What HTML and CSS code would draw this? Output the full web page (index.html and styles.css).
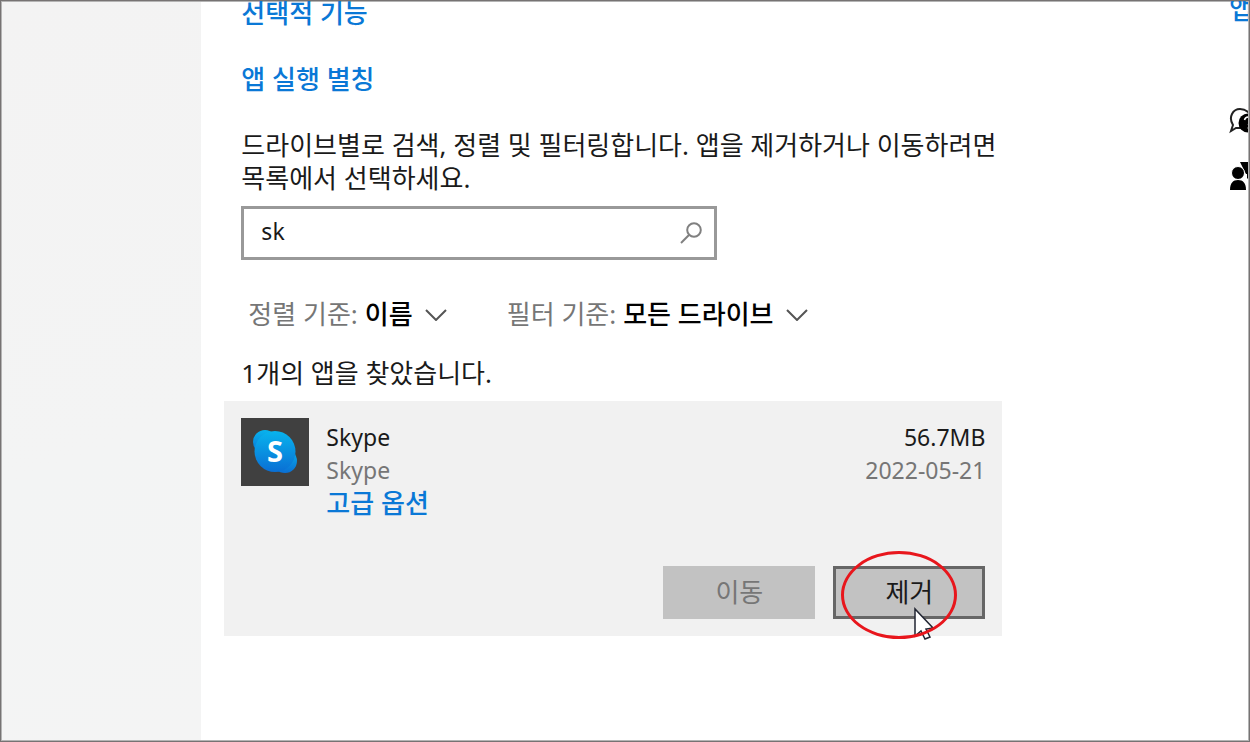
FILE: index.html
```html
<!DOCTYPE html>
<html lang="ko">
<head>
    <meta charset="UTF-8">
    <meta name="viewport" content="width=device-width, initial-scale=1.0">
    <title>앱 및 기능</title>
    <link rel="stylesheet" href="styles.css">
</head>
<body>
    <div class="window">
        <nav class="sidebar"></nav>

        <main class="content">
            <a class="link" href="#">선택적 기능</a>
            <a class="link" href="#">앱 실행 별칭</a>

            <label class="description" for="app-search">드라이브별로 검색, 정렬 및 필터링합니다. 앱을 제거하거나 이동하려면<br>목록에서 선택하세요.</label>

            <div class="search">
                <input class="search-input" id="app-search" type="text" value="sk">
                <svg class="search-icon" viewBox="0 0 22 22" width="22" height="22">
                    <circle cx="14" cy="8" r="6.8"/>
                    <path d="M9.2 12.8L1 21"/>
                </svg>
            </div>

            <div class="filters">
                <div class="filter">
                    <label for="sort">정렬 기준:</label>
                    <select id="sort">
                        <option>이름</option>
                    </select>
                    <svg class="chevron" viewBox="0 0 22 12" width="22" height="12"><path d="M1 1l10 10L21 1"/></svg>
                </div>
                <div class="filter">
                    <label for="drive">필터 기준:</label>
                    <select id="drive">
                        <option>모든 드라이브</option>
                    </select>
                    <svg class="chevron" viewBox="0 0 22 12" width="22" height="12"><path d="M1 1l10 10L21 1"/></svg>
                </div>
            </div>

            <p class="count">1개의 앱을 찾았습니다.</p>

            <!-- Selected app -->
            <section class="app">
                <div class="app-info">
                    <svg class="app-icon" viewBox="0 0 68 68" width="68" height="68">
                        <defs>
                            <linearGradient id="skype" x1="0" y1="0" x2="0" y2="1">
                                <stop offset="0" stop-color="#08b4ee"/>
                                <stop offset="1" stop-color="#0a6fd4"/>
                            </linearGradient>
                        </defs>
                        <rect width="68" height="68" fill="#404040"/>
                        <g fill="url(#skype)">
                            <circle cx="24" cy="24" r="12"/>
                            <circle cx="44" cy="43" r="12"/>
                            <circle cx="34" cy="33.500" r="20.500"/>
                        </g>
                        <text class="app-letter" x="34" y="44" text-anchor="middle">S</text>
                    </svg>
                    <div class="app-text">
                        <span>Skype</span>
                        <span class="muted">Skype</span>
                        <a class="link" href="#">고급 옵션</a>
                    </div>
                    <div class="app-text app-size">
                        <span>56.7MB</span>
                        <span class="muted">2022-05-21</span>
                    </div>
                </div>
                <div class="app-actions">
                    <button class="button" disabled>이동</button>
                    <div class="remove">
                        <button class="button active">제거</button>
                        <svg class="cursor" viewBox="0 0 22 34" width="22" height="34">
                            <path d="M2 2v27l6-5 4 8 5-2-4-8 7-1z"/>
                        </svg>
                        <span class="highlight"></span>
                    </div>
                </div>
            </section>
        </main>

        <!-- Related settings, cut off by the window edge -->
        <aside class="related">
            <a class="link" href="#">앱</a>
            <svg class="help" viewBox="0 0 32 28" width="32" height="28">
                <path d="M4 18C-1 10 4 2 11 2s11 5 11 10-5 9-10 9H7l-5 3z" fill="#fff" stroke="#222" stroke-width="2"/>
                <circle cx="19" cy="16" r="9.500" fill="#000"/>
                <path d="M15.500 13c1-4 7-4 7 0 0 2-3 2-3 5m0 2v2" fill="none" stroke="#fff" stroke-width="1.500"/>
            </svg>
            <svg class="feedback" viewBox="0 0 32 28" width="32" height="28">
                <path d="M11 0h21v12h-9l-5 5v-5h-1z"/>
                <circle cx="9" cy="11" r="6.500" stroke="#fff"/>
                <path d="M1 28c0-7 3-10 8-10s8 3 8 10z"/>
            </svg>
        </aside>
    </div>
</body>
</html>
```
FILE: styles.css
```css
:root {
    --link-color: #0a78d6;
    --text-color: #1a1a1a;
    --muted-color: #767676;
    --line: 33px;
}

* {
    box-sizing: border-box;
}

body {
    margin: 0;
    font-family: "Noto Sans", "Noto Sans CJK KR", sans-serif;
    font-size: 26px;
    line-height: var(--line);
    color: var(--text-color);
    background-color: #fff;
}

.window {
    display: flex;
    height: 100vh;
    padding: 1px;
    border: 1px solid #767373;
    background: #fff;
    box-shadow: inset 0 0 0 1px #b4b4b4;
    overflow: hidden;
}

.sidebar {
    flex: 0 0 16%;
    background: linear-gradient(160deg, #f3f3f3, #f3f4f4 60%, #f4f4f4);
}

.content {
    flex: 0 1 801px;
    margin-top: -5px;
    padding-left: 23px;
}

.content > .link,
.description,
.count {
    display: block;
    margin: 0 0 33px 17px;
}

.link {
    color: var(--link-color);
    font-weight: 500;
    text-decoration: none;
}

.content > .description {
    margin-bottom: 11px;
    white-space: nowrap;
}

.search {
    display: flex;
    align-items: center;
    width: 476px;
    height: 54px;
    margin-left: 17px;
    padding: 0 12px 0 17px;
    border: 3px solid #999;
}

.search-input {
    flex: 1;
    min-width: 0;
    padding: 0 0 4px;
    border: none;
    outline: none;
    font: inherit;
    font-size: 23px;
    color: inherit;
    background: none;
}

.search-icon,
.chevron {
    fill: none;
    stroke: #808080;
    stroke-width: 2;
}

.chevron {
    margin-left: 12px;
    stroke: #555;
}

.filters {
    display: flex;
    gap: 60px;
    margin: 38px 0 26px 24px;
}

.filter {
    display: flex;
    align-items: center;
    color: var(--muted-color);
    white-space: nowrap;
}

.filter select {
    appearance: none;
    margin-left: 7px;
    padding: 0;
    border: none;
    font: inherit;
    font-weight: 500;
    color: #000;
    background: none;
}

.content > .count {
    margin-bottom: 11px;
}

.app {
    padding: 17px;
    background-color: #f1f1f1;
}

.app-info {
    display: flex;
    gap: 17px;
}

.app-icon {
    flex: none;
}

.app-letter {
    font: bold 29px "Open Sans", sans-serif;
    fill: #fff;
}

.app-text {
    display: flex;
    flex-direction: column;
    padding-top: 3px;
}

.app-text span {
    font-size: 23px;
}

.app-size {
    margin-left: auto;
    text-align: right;
}

.muted {
    color: var(--muted-color);
}

.app-actions {
    display: flex;
    justify-content: flex-end;
    gap: 18px;
    margin-top: 46px;
}

.button {
    display: block;
    width: 152px;
    height: 53px;
    padding: 0;
    border: 3px solid #c2c2c2;
    font: inherit;
    color: var(--text-color);
    background-color: #c2c2c2;
}

.button:disabled {
    color: var(--muted-color);
}

.button.active {
    border-color: #666;
}

.remove {
    position: relative;
}

.highlight {
    position: absolute;
    top: -15px;
    left: 8px;
    width: 116px;
    height: 88px;
    border: 3px solid #e8161c;
    border-radius: 50%;
    pointer-events: none;
}

.cursor {
    position: absolute;
    top: 41px;
    left: 80px;
    fill: #fff;
    stroke: #222633;
    stroke-width: 1.5;
    pointer-events: none;
}

.related {
    display: flex;
    flex: 1 0 0;
    flex-direction: column;
    min-width: 0;
    margin-top: -9px;
    padding-left: 227px;
    overflow: hidden;
}

.related svg {
    flex: none;
}

.help {
    margin-top: 81px;
}

.feedback {
    margin-top: 27px;
}
```
